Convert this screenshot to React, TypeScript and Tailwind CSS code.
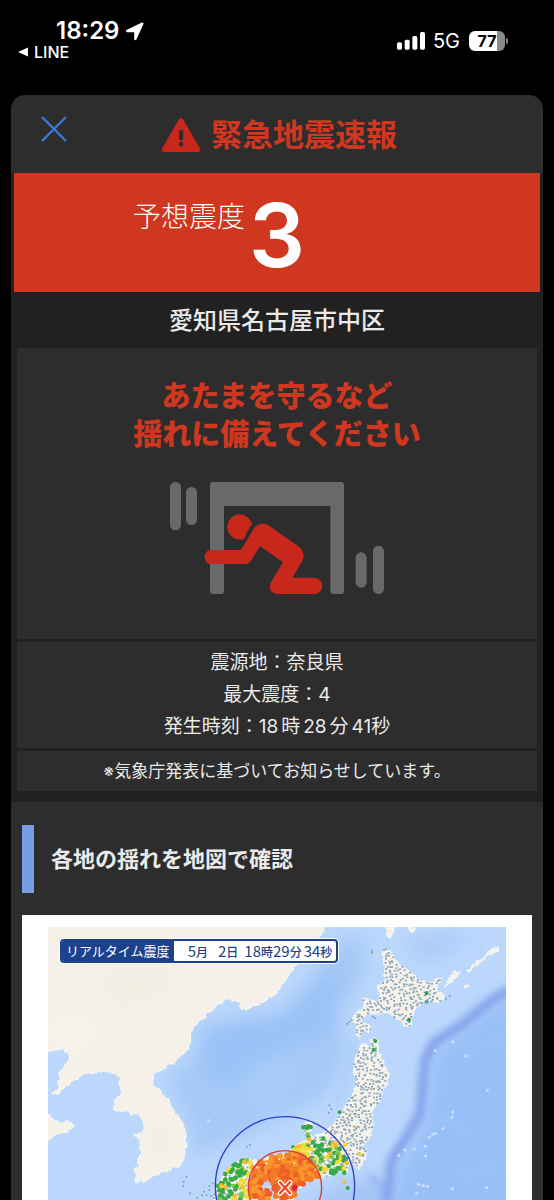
import React from "react";

type Pt = [number, number];

const MAINLAND: Pt[] = [[144,81],[976,81],[960,110],[931,130],[905,160],[880,205],[862,235],[840,262],[831,280],[800,300],[765,318],[737,330],[722,325],[715,305],[695,303],[692,292],[683,299],[678,290],[668,307],[650,315],[635,335],[615,338],[618,352],[595,365],[578,385],[570,405],[574,425],[566,448],[545,465],[520,490],[490,505],[465,520],[458,540],[460,557],[480,570],[505,600],[518,630],[545,665],[555,690],[558,735],[554,765],[548,785],[535,802],[520,800],[505,815],[488,812],[478,824],[458,828],[430,850],[418,842],[405,850],[410,830],[402,815],[418,800],[412,780],[425,760],[418,740],[424,722],[404,706],[424,696],[434,680],[425,658],[417,640],[395,642],[380,630],[362,638],[350,630],[335,625],[348,614],[340,602],[358,592],[365,575],[358,552],[360,538],[348,524],[330,522],[312,510],[290,520],[270,516],[240,530],[215,548],[195,562],[168,583],[155,582],[180,560],[172,545],[182,535],[174,520],[190,512],[196,495],[210,475],[205,460],[190,452],[185,443],[165,452],[144,455]];

const PENINSULA: Pt[] = [[144,648],[152,652],[165,662],[185,670],[198,665],[220,670],[224,684],[208,690],[205,698],[180,698],[160,712],[144,718]];

const HOKKAIDO: Pt[] = [[1149,150],[1163,145],[1176,165],[1196,188],[1226,215],[1261,240],[1296,248],[1326,228],[1311,260],[1309,270],[1331,285],[1329,302],[1291,305],[1271,310],[1251,320],[1236,350],[1229,382],[1211,375],[1181,350],[1161,335],[1131,342],[1106,340],[1084,352],[1081,365],[1106,375],[1116,395],[1090,390],[1078,415],[1067,402],[1071,378],[1056,360],[1066,340],[1089,328],[1093,310],[1086,295],[1106,296],[1131,310],[1139,290],[1134,260],[1153,240],[1156,200],[1147,170]];

const HONSHU: Pt[] = [[1086,435],[1095,430],[1103,445],[1112,442],[1113,420],[1121,412],[1134,420],[1133,445],[1138,465],[1152,490],[1164,520],[1164,550],[1150,570],[1138,605],[1122,620],[1116,640],[1119,680],[1107,710],[1094,735],[1099,765],[1078,802],[1064,800],[1056,775],[1046,790],[1040,822],[1020,812],[985,828],[965,832],[925,840],[912,852],[890,868],[880,895],[870,900],[830,900],[820,875],[812,838],[800,833],[785,850],[777,868],[790,872],[808,862],[812,900],[640,900],[650,860],[680,815],[710,785],[740,776],[780,785],[810,772],[860,765],[880,740],[905,730],[920,718],[912,690],[908,675],[935,665],[935,680],[922,700],[940,712],[970,695],[1000,675],[1020,645],[1035,625],[1048,600],[1065,575],[1070,540],[1060,510],[1065,480],[1075,460]];

const ISLANDS: Pt[][] = [
  [[1158,81],[1183,81],[1175,100],[1170,116],[1163,104]],
  [[1226,81],[1246,81],[1238,98],[1233,97]],
  [[1330,262],[1345,240],[1362,216],[1382,216],[1370,232],[1348,250]],
  [[1401,214],[1425,188],[1450,172],[1470,150],[1495,140],[1494,152],[1468,166],[1450,182],[1428,196],[1408,218]],
  [[1388,262],[1400,255],[1404,260],[1392,266]],
];

const SPECKS: Pt[] = [[1358,425],[1306,452],[1398,468],[1462,571],[1358,636],[1356,651],[1329,686],[1276,739],[1243,747],[1277,768],[1215,750],[1196,766],[1460,863],[1357,866],[1250,880],[626,662],[1128,168],[1288,712],[1298,703],[1306,700],[1256,853],[1270,857],[1282,859]];

const OUTLYING: Pt[] = [[1116,152],[1116,158],[1048,366],[1041,372],[988,616],[994,628],[986,638],[740,740],[749,735],[560,830],[551,846],[550,858],[570,880],[612,875],[628,870],[606,886],[620,886],[634,888],[592,893],[638,850],[628,858],[1338,296],[1349,288],[1125,354],[1118,350]];

const STRONG: { at: Pt; color: string }[] = [
  { at: [1280, 279], color: "#2fa04a" },
  { at: [1279, 306], color: "#4aa79a" },
  { at: [1227, 359], color: "#2fa04a" },
  { at: [1126, 423], color: "#2fa04a" },
  { at: [1121, 449], color: "#35a845" },
  { at: [1019, 637], color: "#38a05c" },
  { at: [1081, 763], color: "#f6d726" },
  { at: [1037, 733], color: "#f6dc2c" },
  { at: [1033, 846], color: "#f5bf2d" },
  { at: [1043, 864], color: "#34a847" },
  { at: [916, 680], color: "#35a56a" },
  { at: [925, 678], color: "#2fa84a" },
];

const EPICENTER: Pt = [855, 862];

const toPoints = (pts: Pt[]) => pts.map((p) => p.join(",")).join(" ");

function inside([x, y]: Pt, poly: Pt[]) {
  let hit = false;
  for (let i = 0, j = poly.length - 1; i < poly.length; j = i++) {
    const [xi, yi] = poly[i];
    const [xj, yj] = poly[j];
    if (yi > y !== yj > y && x < ((xj - xi) * (y - yi)) / (yj - yi) + xi) hit = !hit;
  }
  return hit;
}

function makeRandom(seed: number) {
  let s = seed;
  return () => {
    s = (s * 1664525 + 1013904223) % 4294967296;
    return s / 4294967296;
  };
}

type Dot = { x: number; y: number; r: number; color: string; level: number };

function stations(): Dot[] {
  const rnd = makeRandom(29);
  const dots: Dot[] = [];
  for (const poly of [HOKKAIDO, HONSHU]) {
    for (let gy = 140; gy < 905; gy += 10) {
      for (let gx = 640; gx < 1340; gx += 10) {
        const x = Math.round(gx + (rnd() - 0.5) * 9);
        const y = Math.round(gy + (rnd() - 0.5) * 9);
        const pick = rnd();
        const keep = rnd();
        if (!inside([x, y], poly)) continue;
        const d = Math.hypot(x - EPICENTER[0], y - EPICENTER[1]);
        if (d < 108) {
          const hot = pick + (d < 60 ? 0.4 : 0);
          dots.push({ x, y, r: 9, level: 3, color: hot > 0.85 ? "#ef5f2a" : hot > 0.5 ? "#f47c29" : "#f8982b" });
        } else if (d < 206 && (y > 715 || x < 935)) {
          const yellow = d < 135 ? 0.75 : 0.28;
          if (keep > 0.72) dots.push({ x, y, r: 3, level: 1, color: "#8ba9b5" });
          else dots.push({ x, y, r: 7, level: 2, color: pick < yellow ? (pick < 0.12 ? "#f7b92f" : "#f4dc33") : pick > 0.88 ? "#7cc655" : "#36ab48" });
        } else if (keep < 0.85) {
          dots.push({ x, y, r: 3, level: 0, color: "#86a3bb" });
        }
      }
    }
  }
  return dots.sort((a, b) => a.level - b.level);
}

const STATIONS = stations();

function SeismicMap() {
  return (
    <svg viewBox="144 81 1374 819" className="block w-full" role="img" aria-label="リアルタイム震度の地図">
      <defs>
        <filter id="soft" x="-30%" y="-30%" width="160%" height="160%"><feGaussianBlur stdDeviation="26" /></filter>
        <filter id="fine" x="-30%" y="-30%" width="160%" height="160%"><feGaussianBlur stdDeviation="10" /></filter>
        <filter id="coast" x="-5%" y="-5%" width="110%" height="110%"><feTurbulence type="fractalNoise" baseFrequency="0.07" numOctaves="2" seed="4" /><feDisplacementMap in="SourceGraphic" scale="14" xChannelSelector="R" yChannelSelector="G" /></filter>
      </defs>
      <rect x="144" y="81" width="1374" height="819" fill="#bbd7fb" />
      <g filter="url(#soft)">
        <path d="M600 375 L730 350 L850 335 L930 240 L990 140 L1090 100 L1090 240 L1020 330 L1040 450 L1010 540 L960 600 L850 650 L750 700 L650 740 L590 770 L565 660 L520 580 L500 540 L590 460Z" fill="#a5c9f8" />
        <path d="M620 380 L830 350 L940 250 L1020 200 L1000 340 L990 400 L880 440 L760 500 L690 560 L620 530 L590 470Z" fill="#9bc2f6" />
        <path d="M740 520 L850 450 L900 500 L850 600 L760 620Z" fill="#a9cdf9" />
        <path d="M1210 120 L1400 90 L1370 150 L1260 190Z" fill="#aaccf9" />
        <path d="M1560 260 L1470 320 L1360 410 L1300 450 L1280 600 L1250 710 L1190 800 L1180 940 L1560 940Z" fill="#98bff8" />
        <path d="M880 920 L1000 870 L1150 820 L1180 940Z" fill="#a3c4f6" />
      </g>
      <g fill="none" strokeLinejoin="round" filter="url(#fine)">
        <path d="M1530 268 L1470 305 L1391 370 L1301 430 L1276 480 L1266 570 L1261 640 L1221 710 L1176 780 L1166 910" stroke="#93b4f3" strokeWidth="36" />
        <path d="M1530 268 L1470 308 L1391 375 L1301 428 L1276 480 L1270 570 L1261 640 L1221 710 L1170 790 L1160 910" stroke="#819de8" strokeWidth="12" />
        <path d="M1060 430 L1044 520 L1010 610" stroke="#a9ccf8" strokeWidth="14" />
        <path d="M1110 830 L1150 860 L1140 900" stroke="#95b1f0" strokeWidth="16" />
        <path d="M1400 480 L1440 440 L1510 410 M1330 650 L1400 700 M1380 830 L1480 800" stroke="#a0c5fa" strokeWidth="12" />
      </g>
      <g fill="#f5f1e8" filter="url(#coast)" stroke="#fbf9f3" strokeWidth="3">
        <polygon points={toPoints([[130, 60], [990, 60], ...MAINLAND.slice(1, -1), [130, 455]])} />
        <polygon points={toPoints([[130, 640], ...PENINSULA.slice(1, -1), [130, 722]])} />
        <polygon points={toPoints(HOKKAIDO)} />
        <polygon points={toPoints(HONSHU)} />
        {ISLANDS.map((p, i) => <polygon key={i} points={toPoints(p)} />)}
      </g>
      <g filter="url(#soft)" opacity="0.6">
        <path d="M160 390 L260 360 L230 440 L190 430Z" fill="#fffaf0" />
        <path d="M300 210 L560 190 L480 300 L330 330Z" fill="#f2ecdf" />
        <path d="M460 640 L510 680 L510 760 L460 790Z" fill="#f0eadc" />
      </g>
      {SPECKS.map(([x, y], i) => <circle key={i} cx={x} cy={y} r="5" fill="#c6defb" />)}
      {STATIONS.map((d, i) =>
        d.level < 2
          ? <rect key={i} x={d.x - 3} y={d.y - 2} width="6" height="5" fill={d.color} />
          : <circle key={i} cx={d.x} cy={d.y} r={d.r} fill={d.color} />
      )}
      {OUTLYING.map(([x, y], i) => <circle key={i} cx={x} cy={y} r="3" fill="#7fa0ae" />)}
      {STRONG.map((s, i) => <circle key={i} cx={s.at[0]} cy={s.at[1]} r="6" fill={s.color} />)}
      <path d="M795 790 l8 3 M835 775 l5 4 M880 790 l6 -2 M770 800 l4 4" stroke="#fbe7b8" strokeWidth="5" />
      <circle cx="884" cy="863" r="8" fill="#d9204b" />
      <circle cx="855" cy="859" r="209" fill="none" stroke="#2f3ec4" strokeWidth="4" />
      <circle cx="855" cy="862" r="110" fill="none" stroke="#dc3a3a" strokeWidth="4" />
      <g strokeLinecap="round">
        <path d="M840 847 L870 880 M870 847 L840 880" stroke="#ffffff" strokeWidth="15" />
        <path d="M840 847 L870 880 M870 847 L840 880" stroke="#e8432d" strokeWidth="7" />
      </g>
    </svg>
  );
}

function TakeCover() {
  return (
    <svg viewBox="60 66 642 336" className="h-28 w-[214px]" role="img" aria-label="机の下で身を守る人">
      <g fill="#696969">
        <rect x="60" y="66" width="33" height="145" rx="16" />
        <rect x="108" y="81" width="33" height="114" rx="16" />
        <rect x="617" y="277" width="33" height="106" rx="16" />
        <rect x="669" y="257" width="33" height="145" rx="16" />
        <path d="M190 66 H572 Q582 66 582 76 V393 Q582 402 573 402 H550 Q541 402 541 393 V138 H222 V393 Q222 402 213 402 H190 Q180 402 180 393 V76 Q180 66 190 66Z" />
      </g>
      <g fill="#c8281c">
        <path d="M268 163 C286 163 301 175 306 193 C296 207 289 220 282 237 A38 38 0 1 1 268 163Z" />
        <path d="M184 270 H273 L312 205 C320 192 340 188 354 195 L444 258 C460 270 465 286 456 304 L427 353 H492 C524 353 525 402 492 402 H383 C362 402 353 383 364 365 L399 307 L330 258 L304 300 Q297 312 284 312 H184 C157 312 157 270 184 270Z" />
      </g>
    </svg>
  );
}

function StatusBar() {
  return (
    <header className="flex h-[95px] items-start justify-between pr-[46px] pl-[18px] text-white">
      <div className="pt-[19px]">
        <div className="flex items-center gap-1.5 pl-[38px]">
          <span className="text-2xl leading-6 font-semibold">18:29</span>
          <svg viewBox="0 0 57 57" className="size-[19px]" aria-hidden="true">
            <path d="M52 5 L31 51 V27 H6Z" fill="#fff" stroke="#fff" strokeWidth="7" strokeLinejoin="round" />
          </svg>
        </div>
        <a href="#line" className="flex items-center gap-1.5 text-base leading-[18px] font-medium">
          <svg viewBox="0 0 10 10" className="size-2.5" aria-hidden="true"><path d="M10 0.5 V9.5 L0 5Z" fill="#fff" /></svg>
          LINE
        </a>
      </div>
      <div className="flex items-center pt-[31px]">
        <svg viewBox="0 0 84 54" className="h-[18px] w-7" aria-hidden="true">
          <g fill="#fff">
            <rect x="0" y="31" width="15" height="22" rx="5" />
            <rect x="23" y="23" width="15" height="30" rx="5" />
            <rect x="46" y="12" width="15" height="41" rx="5" />
            <rect x="69" y="0" width="15" height="53" rx="5" />
          </g>
        </svg>
        <span className="ml-2 text-xl leading-5">5G</span>
        <div className="ml-[9px] flex items-center gap-px">
          <div className="flex h-5 w-9 items-center justify-center rounded-md bg-[linear-gradient(90deg,#fff_77%,#8a8a8a_77%)] text-base leading-5 font-bold text-black">77</div>
          <div className="h-1.5 w-0.5 rounded-r-full bg-[#8a8a8a]" />
        </div>
      </div>
    </header>
  );
}

export default function App() {
  return (
    <div className="min-h-screen bg-black font-['Inter','Noto_Sans_CJK_JP',sans-serif]">
      <StatusBar />
      <main lang="ja" className="mx-[11px] overflow-hidden rounded-t-[14px] bg-[#2d2d2d] text-[#eaeaea]">
        <div className="grid h-[78px] grid-cols-[1fr_auto_1fr] items-start">
          <button type="button" aria-label="閉じる" className="mt-[21px] ml-[30px] w-[26px]">
            <svg viewBox="0 0 26 26" className="size-[26px]" aria-hidden="true"><path d="M1 1 L25 25 M25 1 L1 25" stroke="#3c79d6" strokeWidth="2.4" /></svg>
          </button>
          <h1 className="flex items-center gap-2.5 pt-5 pl-1 text-[31px] leading-10 font-bold text-[#cf3720]">
            <svg viewBox="0 0 120 104" className="h-[34px] w-10" aria-hidden="true">
              <path d="M53 5 Q60 -4 67 5 L118 93 Q122 103 112 104 H8 Q-2 103 2 93Z" fill="#c8281c" />
              <rect x="54" y="36" width="13" height="33" rx="6" fill="#2d2d2d" />
              <circle cx="60.500" cy="80" r="7" fill="#2d2d2d" />
            </svg>
            緊急地震速報
          </h1>
        </div>

        <section className="bg-[#212121] pb-[11px]">
          <div className="mx-[3px] grid h-[119px] grid-cols-[1fr_auto_1fr] items-start bg-[#cf3720] text-white">
            <span className="pt-6 pr-1 text-right text-[28px] leading-10 font-light">予想震度</span>
            <strong className="pt-[18px] text-[88px] leading-[88px] font-semibold">3</strong>
          </div>
          <h2 className="pt-[11px] pb-[9px] text-center text-2xl leading-9 font-medium">愛知県名古屋市中区</h2>
          <div className="mx-1.5 flex flex-col gap-[3px]">
            <div className="flex flex-col items-center bg-[#2d2d2d] pt-[30px] pb-[45px]">
              <p className="text-center text-[29px] leading-[38px] font-black text-[#cf3720]">
                あたまを守るなど<br />揺れに備えてください
              </p>
              <div className="pt-7"><TakeCover /></div>
            </div>
            <div className="bg-[#2d2d2d] py-[5px] text-center text-[19px] leading-8">
              <p>震源地：奈良県</p>
              <p>最大震度：4</p>
              <p className="flex justify-center gap-[3px]">
                <span>発生時刻：18</span><span>時</span><span>28</span><span>分</span><span>41秒</span>
              </p>
            </div>
            <p className="bg-[#2d2d2d] text-center text-[17px] leading-10">※気象庁発表に基づいてお知らせしています。</p>
          </div>
        </section>

        <section className="px-[11px] pt-[23px]">
          <h2 className="border-l-[12px] border-[#779ee2] pl-[17px] text-[22px] leading-[68px] font-bold">各地の揺れを地図で確認</h2>
          <div className="mt-[22px] bg-white px-[26px] pt-3">
            <div className="relative">
              <SeismicMap />
              <div className="absolute top-3 left-3 flex h-6 overflow-hidden rounded-sm border-2 border-[#1d428c] bg-white font-['Noto_Sans_CJK_JP',sans-serif] text-[#1d3f86] ring-1 ring-white">
                <span className="bg-[#1d428c] px-1 text-[13px] leading-5 text-white">リアルタイム震度</span>
                <span className="flex items-center pr-1 pl-3.5 text-[15px] leading-5 whitespace-nowrap">
                  <span>5<small className="text-xs font-medium">月</small></span>
                  <span className="ml-2.5">2<small className="text-xs font-medium">日</small></span>
                  <span className="ml-1.5">18<small className="text-xs font-medium">時</small></span>
                  <span>29<small className="text-xs font-medium">分</small></span>
                  <span className="ml-0.5">34<small className="text-xs font-medium">秒</small></span>
                </span>
              </div>
            </div>
          </div>
        </section>
      </main>
    </div>
  );
}
